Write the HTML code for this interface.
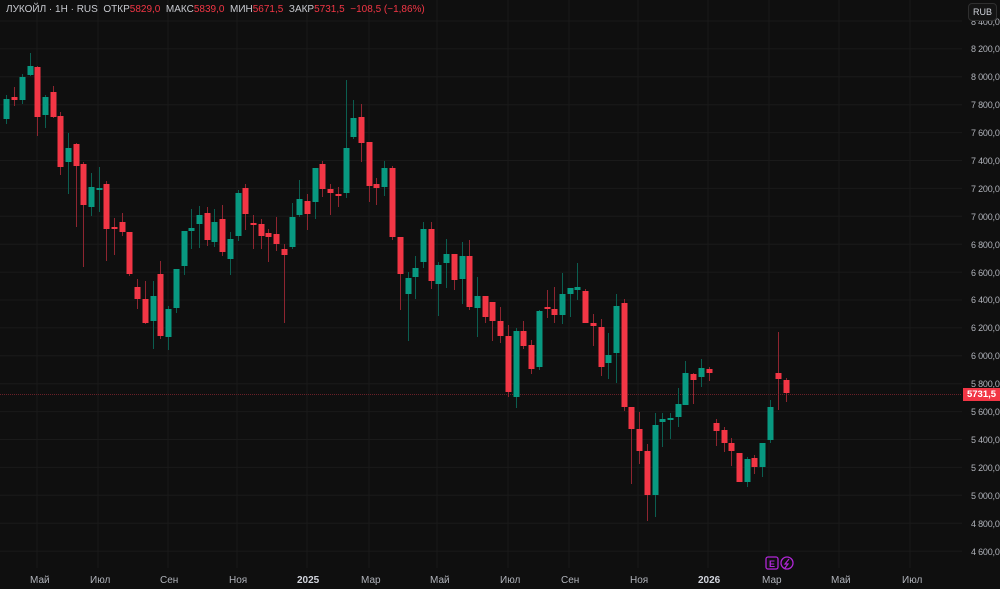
<!DOCTYPE html>
<html><head><meta charset="utf-8"><style>
html,body{margin:0;padding:0;background:#0f0f0f;width:1000px;height:589px;overflow:hidden;font-family:"Liberation Sans",sans-serif}
#c{position:absolute;left:0;top:0}
.t{position:absolute;font-size:10px;color:#b0b3ba;white-space:nowrap}
.a{position:absolute;left:971px;font-size:9px;color:#b0b3ba;white-space:nowrap;letter-spacing:-0.2px}
.hdr{position:absolute;left:6px;top:4px;font-size:10px;color:#c8cad0;white-space:nowrap}
.hdr .r{color:#f23645}
.rub{position:absolute;left:968px;top:3px;width:27px;height:16px;border:1px solid #2f2f2f;border-radius:4px;background:#141414;color:#d1d4dc;font-size:9px;line-height:16px;text-align:center;z-index:2}
.pl{position:absolute;left:963px;top:388px;width:37px;height:13px;background:#f23645;color:#fff;font-size:9.5px;font-weight:bold;line-height:13px;text-align:center}
</style></head><body>
<svg id="c" width="1000" height="589" xmlns="http://www.w3.org/2000/svg"></svg>
<div class="hdr">ЛУКОЙЛ · 1Н · RUS &nbsp;ОТКР<span class="r">5829,0</span> &nbsp;МАКС<span class="r">5839,0</span> &nbsp;МИН<span class="r">5671,5</span> &nbsp;ЗАКР<span class="r">5731,5</span> &nbsp;<span class="r">−108,5 (−1,86%)</span></div>
<div class="rub">RUB</div>
<div class="a" style="top:17px">8 400,0</div>
<div class="a" style="top:44px">8 200,0</div>
<div class="a" style="top:72px">8 000,0</div>
<div class="a" style="top:100px">7 800,0</div>
<div class="a" style="top:128px">7 600,0</div>
<div class="a" style="top:156px">7 400,0</div>
<div class="a" style="top:184px">7 200,0</div>
<div class="a" style="top:212px">7 000,0</div>
<div class="a" style="top:240px">6 800,0</div>
<div class="a" style="top:268px">6 600,0</div>
<div class="a" style="top:295px">6 400,0</div>
<div class="a" style="top:323px">6 200,0</div>
<div class="a" style="top:351px">6 000,0</div>
<div class="a" style="top:379px">5 800,0</div>
<div class="a" style="top:407px">5 600,0</div>
<div class="a" style="top:435px">5 400,0</div>
<div class="a" style="top:463px">5 200,0</div>
<div class="a" style="top:491px">5 000,0</div>
<div class="a" style="top:519px">4 800,0</div>
<div class="a" style="top:547px">4 600,0</div>
<div class="pl">5731,5</div>
<div class="t" style="left:30px;top:575px">Май</div>
<div class="t" style="left:90px;top:575px">Июл</div>
<div class="t" style="left:160px;top:575px">Сен</div>
<div class="t" style="left:229px;top:575px">Ноя</div>
<div class="t" style="left:297px;top:575px;font-weight:bold;color:#d1d4dc">2025</div>
<div class="t" style="left:361px;top:575px">Мар</div>
<div class="t" style="left:430px;top:575px">Май</div>
<div class="t" style="left:500px;top:575px">Июл</div>
<div class="t" style="left:561px;top:575px">Сен</div>
<div class="t" style="left:630px;top:575px">Ноя</div>
<div class="t" style="left:698px;top:575px;font-weight:bold;color:#d1d4dc">2026</div>
<div class="t" style="left:762px;top:575px">Мар</div>
<div class="t" style="left:831px;top:575px">Май</div>
<div class="t" style="left:902px;top:575px">Июл</div>
<script>
var s=document.getElementById('c'),h='';
for(var i=0;i<20;i++){var y=21+i*27.9;h+='<line x1="0" x2="962" y1="'+y+'" y2="'+y+'" stroke="#1a1a1a"/>';}
[37,98,168,237,307,369,437,508,569,638,708,769,839,910].forEach(function(x){h+='<line x1="'+x+'" x2="'+x+'" y1="0" y2="568" stroke="#1a1a1a"/>';});
h+='<line x1="0" x2="962" y1="394.5" y2="394.5" stroke="#6a2028" stroke-dasharray="1,1"/>';
var d=[[6,'g',99,119,95,124],[14,'r',97,100,87,106],[22,'g',77,100,74,104],[30,'g',66,75,53,76],[37,'r',67,117,66,136],[45,'g',97,115,95,128],[53,'r',92,117,86,118],[60,'r',116,167,112,175],[68,'g',148,162,133,194],[76,'r',144,166,143,227],[83,'r',164,205,162,267],[91,'g',187,207,173,216],[99,'g',188,189,167,212],[106,'r',184,229,181,261],[114,'r',227,229,218,255],[122,'r',222,232,213,236],[129,'r',232,274,232,276],[137,'r',287,299,279,309],[145,'r',299,323,281,324],[153,'g',296,321,281,349],[160,'r',274,336,261,339],[168,'g',309,337,306,350],[176,'g',269,308,269,313],[184,'g',231,266,231,275],[191,'g',228,231,209,249],[199,'g',215,224,206,248],[207,'r',213,240,207,246],[214,'g',222,242,209,247],[222,'r',219,252,205,256],[230,'g',239,259,232,275],[238,'g',193,236,190,241],[245,'r',188,214,184,230],[253,'r',223,225,215,249],[261,'r',224,236,219,249],[268,'r',233,237,229,262],[276,'r',234,244,217,251],[284,'r',249,255,244,323],[292,'g',217,247,203,249],[299,'g',199,215,180,217],[307,'r',201,214,194,230],[315,'g',168,202,168,219],[322,'r',164,189,161,197],[330,'r',189,193,184,215],[338,'r',194,196,187,207],[346,'g',148,193,80,198],[353,'g',118,137,100,139],[361,'r',117,143,104,162],[369,'r',142,186,142,202],[376,'r',184,188,178,205],[384,'g',168,187,161,196],[392,'r',168,237,166,240],[400,'r',237,274,237,310],[408,'g',278,294,272,341],[415,'g',268,277,256,299],[423,'g',229,262,222,268],[431,'r',229,281,222,289],[438,'g',265,284,262,316],[446,'g',254,263,239,288],[454,'r',254,280,254,290],[462,'g',256,279,242,304],[469,'r',256,307,240,310],[477,'g',296,308,277,337],[485,'r',296,317,296,323],[492,'r',302,321,302,341],[500,'r',321,336,307,343],[508,'r',336,392,325,397],[516,'g',331,397,328,408],[523,'r',331,346,321,349],[531,'r',345,369,340,374],[539,'g',311,367,310,370],[547,'r',307,309,290,318],[554,'r',309,315,287,323],[562,'g',294,315,273,324],[570,'g',288,294,288,317],[577,'g',287,290,263,300],[585,'r',291,323,289,323],[593,'r',323,326,314,346],[601,'r',327,367,319,376],[608,'g',355,363,333,379],[616,'g',306,353,294,383],[624,'r',303,407,299,411],[631,'r',407,429,407,484],[639,'r',429,451,412,464],[647,'r',451,495,444,521],[655,'g',425,495,413,517],[662,'g',419,422,413,447],[670,'g',418,420,413,439],[678,'g',404,417,388,427],[685,'g',373,405,361,405],[693,'r',374,380,373,404],[701,'g',368,377,359,387],[709,'r',369,373,367,381],[716,'r',423,431,419,446],[724,'r',430,443,427,452],[731,'r',443,451,438,466],[739,'r',453,482,453,482],[747,'g',459,482,457,487],[754,'r',458,467,455,474],[762,'g',443,467,443,477],[770,'g',407,440,400,443],[778,'r',373,379,332,410],[786,'r',380,393,378,402]];
d.forEach(function(c){var col=c[1]=='g'?'#089981':'#f23645',wc=c[1]=='g'?'#0b5e50':'#8e2530';
h+='<line x1="'+(c[0]+.5)+'" x2="'+(c[0]+.5)+'" y1="'+c[4]+'" y2="'+c[5]+'" stroke="'+wc+'"/>';
h+='<rect x="'+(c[0]-2.5)+'" y="'+c[2]+'" width="6" height="'+Math.max(2,c[3]-c[2])+'" fill="'+col+'"/>';});
h+='<rect x="766" y="557" width="12" height="12" rx="2" fill="none" stroke="#b026d6" stroke-width="1.3"/><text x="769" y="567" font-size="9" font-family="Liberation Sans" font-weight="bold" fill="#b026d6">E</text>';
h+='<circle cx="787" cy="563" r="6" fill="none" stroke="#b026d6" stroke-width="1.3"/><path d="M789 559 L785 564 L788 564 L785 568" fill="none" stroke="#b026d6" stroke-width="1.2"/>';
s.innerHTML=h;
</script>
</body></html>
